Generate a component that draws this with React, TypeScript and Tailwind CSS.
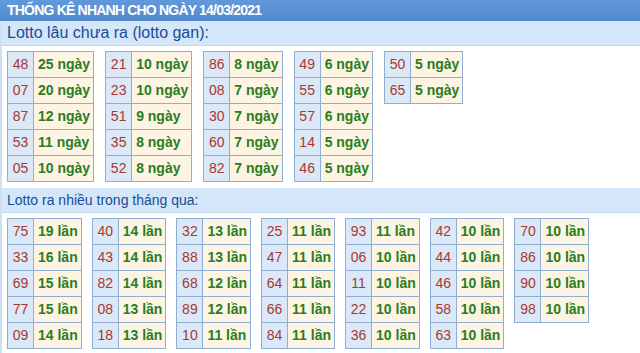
const gan: [string, string][][] = [
  [['48', '25 ngày'], ['07', '20 ngày'], ['87', '12 ngày'], ['53', '11 ngày'], ['05', '10 ngày']],
  [['21', '10 ngày'], ['23', '10 ngày'], ['51', '9 ngày'], ['35', '8 ngày'], ['52', '8 ngày']],
  [['86', '8 ngày'], ['08', '7 ngày'], ['30', '7 ngày'], ['60', '7 ngày'], ['82', '7 ngày']],
  [['49', '6 ngày'], ['55', '6 ngày'], ['57', '6 ngày'], ['14', '5 ngày'], ['46', '5 ngày']],
  [['50', '5 ngày'], ['65', '5 ngày']],
];

const nhieu: [string, string][][] = [
  [['75', '19 lần'], ['33', '16 lần'], ['69', '15 lần'], ['77', '15 lần'], ['09', '14 lần']],
  [['40', '14 lần'], ['43', '14 lần'], ['82', '14 lần'], ['08', '13 lần'], ['18', '13 lần']],
  [['32', '13 lần'], ['88', '13 lần'], ['68', '12 lần'], ['89', '12 lần'], ['10', '11 lần']],
  [['25', '11 lần'], ['47', '11 lần'], ['64', '11 lần'], ['66', '11 lần'], ['84', '11 lần']],
  [['93', '11 lần'], ['06', '10 lần'], ['11', '10 lần'], ['22', '10 lần'], ['36', '10 lần']],
  [['42', '10 lần'], ['44', '10 lần'], ['46', '10 lần'], ['58', '10 lần'], ['63', '10 lần']],
  [['70', '10 lần'], ['86', '10 lần'], ['90', '10 lần'], ['98', '10 lần']],
];

function NumTable({ rows, pad }: { rows: [string, string][]; pad: string }) {
  return (
    <table className="border-collapse border border-[#8faed3] text-[14px]">
      <tbody>
        {rows.map(([num, val]) => (
          <tr key={num} className="h-[26px]">
            <td className="w-[26px] border border-[#8faed3] bg-[#dbe8f7] p-0 text-center text-[#a8392e]">{num}</td>
            <td className={`border border-[#8faed3] bg-[#fdf4e3] py-0 font-bold whitespace-nowrap text-[#2a7d22] ${pad}`}>
              {val}
            </td>
          </tr>
        ))}
      </tbody>
    </table>
  );
}

function Section({
  title,
  tables,
  gap,
  pad,
  titleSize,
}: {
  title: string;
  tables: [string, string][][];
  gap: string;
  pad: string;
  titleSize: string;
}) {
  return (
    <div>
      <div className={`flex h-[25px] items-center border-b border-[#c3d9f0] bg-[#d3e6fa] pl-[5px] text-[#1a4c96] ${titleSize}`}>
        {title}
      </div>
      <div className={`flex items-start pt-[5px] pb-[6px] pl-[5px] ${gap}`}>
        {tables.map((t, i) => (
          <NumTable key={i} rows={t} pad={pad} />
        ))}
      </div>
    </div>
  );
}

export default function App() {
  return (
    <div className="h-[353px] w-[640px] overflow-hidden bg-white font-['Liberation_Sans',Arial,sans-serif]">
      <div className="flex h-[21px] items-center bg-gradient-to-b from-[#6299da] to-[#5089cd] pl-[7px] text-[14px] font-bold tracking-[-0.8px] text-white">
        THỐNG KÊ NHANH CHO NGÀY 14/03/2021
      </div>
      <div className="border-l-2 border-[#cfe0f2]">
        <Section
          title="Lotto lâu chưa ra (lotto gan):"
          tables={gan}
          gap="gap-[11px]"
          pad="pl-1 pr-[3px]"
          titleSize="text-[16px]"
        />
        <Section
          title="Lotto ra nhiều trong tháng qua:"
          tables={nhieu}
          gap="gap-[10px]"
          pad="pl-1 pr-[3px]"
          titleSize="text-[14px]"
        />
      </div>
    </div>
  );
}
